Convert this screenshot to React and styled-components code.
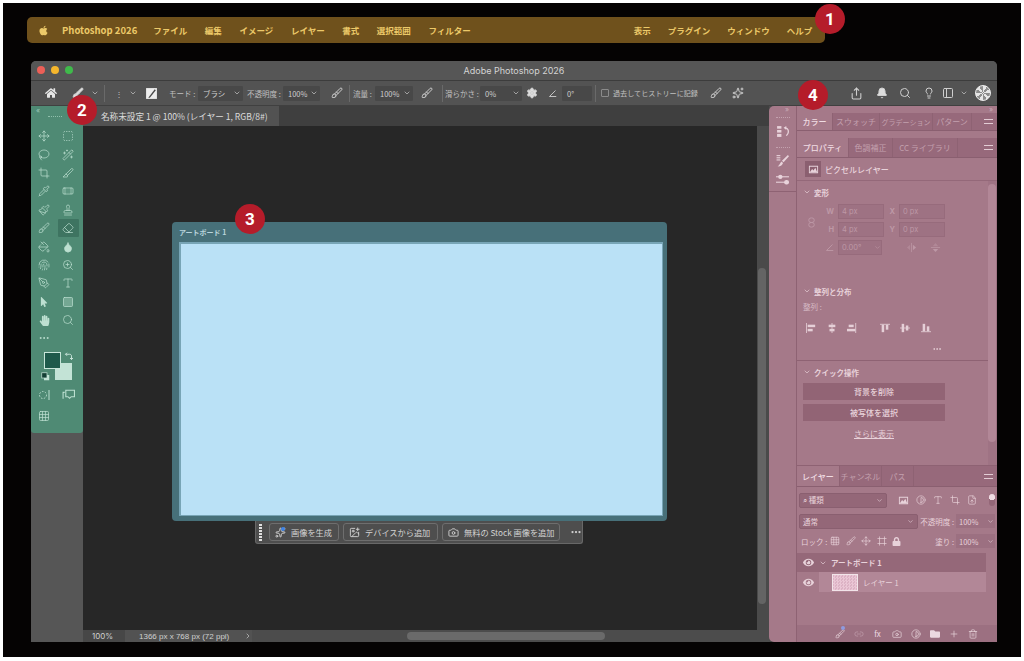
import React from "react";
import styled, { createGlobalStyle } from "styled-components";
import { FaApple, FaHome, FaHandPaper, FaFolder, FaMousePointer, FaLock, FaEye } from "react-icons/fa";
import {
  Brush, ChevronDown, ChevronRight, Settings, Share, Bell, Search,
  Lightbulb, PanelLeft, Move, SquareDashed, Lasso, WandSparkles, Crop, Slice, Pipette, Bandage,
  Paintbrush, Stamp, Eraser, PaintBucket, Droplet, PenTool, Type, Square,
  Ellipsis, Contrast, Link2, Trash2, Camera, Sparkles, Plus, FileUp, Grid3x3,
  Frame as FrameIcon, Fingerprint, ZoomIn, ImagePlus,
} from "lucide-react";

const GlobalStyle = createGlobalStyle`
  html, body { margin: 0; background: #fff; }
  body { font-family: "Noto Sans CJK JP", "Noto Sans", sans-serif; }
  * { box-sizing: border-box; }
`;

const Frame = styled.div`
  position: relative;
  width: 1018px;
  height: 654px;
  margin: 3px 0 0 3px;
  background: #050303;
  padding: 14px 0 0 24px;
  overflow: hidden;
`;

const Badge = styled.div`
  position: absolute;
  left: ${(p) => p.$x - 18}px;
  top: ${(p) => p.$y - 18}px;
  width: 30px;
  height: 30px;
  border-radius: 50%;
  background: #b51c2a;
  color: #fff;
  font: 700 17px "Liberation Sans Narrow", "Roboto", sans-serif;
  display: flex;
  align-items: center;
  justify-content: center;
  z-index: 5;
`;

const MenuBar = styled.div`
  width: 798px;
  height: 26px;
  background: #6f511c;
  border-radius: 5px;
  display: flex;
  align-items: center;
  padding-left: 11px;
  color: #ecc969;
  font-size: 8.5px;
`;

const MenuItem = styled.span`
  margin-left: ${(p) => p.$gap || 17.6}px;
  font-size: ${(p) => (p.$bold ? 9.5 : 8.5)}px;
  font-weight: 700;
  white-space: nowrap;
`;

const Window = styled.div`
  margin: 18px 0 0 4px;
  width: 966px;
  height: 581px;
  background: #4a4a4a;
  border-radius: 5px 5px 0 0;
  display: flex;
  flex-direction: column;
  overflow: hidden;
`;

const TitleBar = styled.div`
  position: relative;
  height: 20px;
  flex: none;
  background: #565656;
  border-bottom: 1px solid #3c3c3c;
  display: flex;
  align-items: center;
  justify-content: center;
  color: #d4d4d4;
  font: 9px "Inter", sans-serif;
`;

const Lights = styled.div`
  position: absolute;
  left: 6px;
  top: 5px;
  display: flex;
  gap: 6px;
`;

const Light = styled.i`
  width: 8px;
  height: 8px;
  border-radius: 50%;
  background: ${(p) => p.$c};
`;

const OptionBar = styled.div`
  height: 25px;
  flex: none;
  background: #535353;
  border-bottom: 1px solid #404040;
  display: flex;
  align-items: center;
  color: #cfcfcf;
  font-size: 7.5px;
  padding-left: 14px;
  svg { flex: none; }
`;

const OptText = styled.span`
  margin-left: ${(p) => p.$ml || 0}px;
  width: ${(p) => (p.$w ? `${p.$w}px` : "auto")};
  flex: none;
  white-space: nowrap;
  color: #c0c0c0;
  font-size: ${(p) => p.$fs || 7.5}px;
`;

const OptSlot = styled.span`
  margin-left: ${(p) => p.$ml || 0}px;
  display: inline-flex;
  flex: none;
`;

const Divider = styled.i`
  width: 1px;
  height: 17px;
  flex: none;
  background: #6a6a6a;
  margin-left: ${(p) => p.$ml || 0}px;
`;

const OptField = styled.span`
  margin-left: ${(p) => p.$ml || 0}px;
  width: ${(p) => p.$w}px;
  flex: none;
  height: 15px;
  background: #484848;
  display: flex;
  align-items: center;
  justify-content: space-between;
  padding: 0 2px 0 5px;
  border-radius: 1px;
  color: #cfcfcf;
  font-size: 7.5px;
`;

const CheckBox = styled.i`
  width: 8px;
  height: 8px;
  flex: none;
  border: 1px solid #8b8b8b;
  border-radius: 1px;
  margin-left: ${(p) => p.$ml || 0}px;
`;

const Avatar = styled.span`
  width: 16px;
  height: 16px;
  flex: none;
  margin-left: 7px;
  border-radius: 50%;
  background: repeating-conic-gradient(#e6e6e6 0 30deg, #8d8d8d 30deg 60deg);
  border: 1px solid #eee;
`;

const Workspace = styled.div`
  flex: 1;
  display: flex;
  min-height: 0;
`;

const LeftColumn = styled.div`
  width: 52px;
  flex: none;
  background: #565656;
`;

const ToolPanel = styled.div`
  height: 327px;
  background: #4f8a74;
  border-radius: 0 0 3px 3px;
  display: flex;
  flex-direction: column;
  align-items: stretch;
  color: #bde0d1;
`;

const ToolHead = styled.div`
  height: 21px;
  flex: none;
  padding: 0 0 0 5px;
  color: #9cc7b6;
  font: 7px/9px "Inter", sans-serif;
`;

const Grip = styled.i`
  display: block;
  width: ${(p) => p.$w || 14}px;
  height: 1px;
  margin: ${(p) => p.$m || "1px auto 0"};
  border-top: 1px dotted ${(p) => p.$c || "#8fbfab"};
`;

const ToolGrid = styled.div`
  display: grid;
  grid-template-columns: 24px 24px;
  grid-auto-rows: 18.4px;
  justify-items: center;
  align-items: center;
  padding-left: 1px;
  margin-top: ${(p) => p.$mt || 0}px;
`;

const ToolCell = styled.span`
  width: 21px;
  height: 18px;
  display: flex;
  align-items: center;
  justify-content: center;
  background: ${(p) => (p.$active ? "#3e7461" : "transparent")};
  border-radius: 1px;
`;

const Swatches = styled.div`
  position: relative;
  height: 34px;
  margin: 4px 0 0 13px;
`;

const Swatch = styled.i`
  position: absolute;
  left: ${(p) => p.$x}px;
  top: ${(p) => p.$y}px;
  width: 17px;
  height: 17px;
  background: ${(p) => p.$c};
  border: ${(p) => (p.$line ? "1px solid #c8e6da" : "none")};
`;

const SwatchTool = styled.span`
  position: absolute;
  left: ${(p) => p.$x}px;
  top: ${(p) => p.$y}px;
  display: flex;
  color: #d5ece3;
`;

const Center = styled.div`
  width: 686px;
  flex: none;
  display: flex;
  flex-direction: column;
  background: #3e3e3e;
`;

const DocTabs = styled.div`
  height: 20px;
  flex: none;
  display: flex;
  background: #3f3f3f;
`;

const DocTab = styled.div`
  width: 196px;
  background: #525252;
  color: #dcdcdc;
  font-size: 8.6px;
  display: flex;
  align-items: center;
  padding-left: 18px;
  white-space: nowrap;
`;

const CanvasRow = styled.div`
  flex: 1;
  display: flex;
  min-height: 0;
`;

const Canvas = styled.div`
  width: 674px;
  flex: none;
  background: #272727;
  padding: 96px 0 0 89px;
`;

const VScroll = styled.div`
  width: 12px;
  background: #4a4a4a;
  padding: 142px 3px 0 1px;
`;

const VThumb = styled.div`
  height: 336px;
  background: #646464;
  border-radius: 4px;
`;

const Artboard = styled.div`
  width: 495px;
  height: 299px;
  background: #477079;
  border-radius: 4px;
  padding: 0 4px 5px 7px;
  display: flex;
  flex-direction: column;
`;

const ArtboardTitle = styled.div`
  height: 20px;
  flex: none;
  display: flex;
  align-items: center;
  color: #b9d4dc;
  font-size: 7px;
  font-weight: 700;
`;

const ArtboardFill = styled.div`
  flex: 1;
  background: #bae1f6;
  border: 2px solid #78a5b6;
  border-right-width: 1px;
  border-bottom-width: 1px;
`;

const TaskBar = styled.div`
  margin-left: 83px;
  width: 328px;
  height: 23px;
  background: #4e4e4e;
  border: 1px solid #686868;
  border-top: none;
  border-radius: 0 0 3px 3px;
  display: flex;
  align-items: center;
  padding-left: 3px;
  color: #d3d3d3;
  font-size: 8.2px;
`;

const GripBar = styled.i`
  width: 3px;
  height: 17px;
  margin-right: 7px;
  background: repeating-linear-gradient(#e0e0e0 0 2px, transparent 2px 3px);
`;

const TaskButton = styled.span`
  position: relative;
  width: ${(p) => p.$w}px;
  height: 18px;
  margin-right: 4px;
  border: 1px solid #6e6e6e;
  border-radius: 3px;
  display: flex;
  align-items: center;
  gap: 5px;
  padding-left: 5px;
  white-space: nowrap;
  svg { flex: none; }
`;

const BlueDot = styled.i`
  position: absolute;
  left: ${(p) => p.$x}px;
  top: ${(p) => p.$y}px;
  width: 4px;
  height: 4px;
  border-radius: 50%;
  background: ${(p) => p.$c || "#3f83e6"};
`;

const StatusBar = styled.div`
  height: 12px;
  flex: none;
  display: flex;
  align-items: stretch;
  background: #4c4c4c;
  color: #cfcfcf;
`;

const ZoomField = styled.span`
  width: 42px;
  padding-left: 9px;
  background: #474747;
  font: 8px/12px "Inter", sans-serif;
`;

const DocInfo = styled.span`
  width: 127px;
  padding-left: 14px;
  background: #525252;
  display: flex;
  align-items: center;
  justify-content: space-between;
  font: 8px "Liberation Sans", sans-serif;
  white-space: nowrap;
`;

const HThumb = styled.span`
  width: 198px;
  height: 8px;
  margin: 2px 0 0 155px;
  background: #6a6a6a;
  border-radius: 4px;
`;

const RightPanel = styled.div`
  position: relative;
  width: 228px;
  flex: none;
  background: #a57989;
  border-radius: 5px 0 0 5px;
  display: flex;
  color: #e8d2da;
  font-size: 8px;
`;

const CollapseMark = styled.span`
  position: absolute;
  top: 0;
  left: ${(p) => p.$x}px;
  color: #c9a9b6;
  font: 7px/7px "Inter", sans-serif;
`;

const Dock = styled.div`
  width: 28px;
  flex: none;
  border-right: 1px solid #8e6273;
  padding-top: 11px;
  color: #e8d2da;
`;

const DockGroup = styled.div`
  height: ${(p) => p.$h}px;
  display: flex;
  flex-direction: column;
  align-items: center;
  gap: ${(p) => p.$gap}px;
  border-bottom: ${(p) => (p.$line ? "1px solid #8e6273" : "none")};
`;

const PanelMain = styled.div`
  flex: 1;
  display: flex;
  flex-direction: column;
  padding-top: 7px;
  min-width: 0;
`;

const TabRow = styled.div`
  height: ${(p) => p.$h}px;
  flex: none;
  margin-bottom: ${(p) => p.$mb || 0}px;
  background: #97697b;
  border-bottom: 1px solid #8a5f70;
  display: flex;
  align-items: stretch;
  position: relative;
`;

const Tab = styled.span`
  width: ${(p) => p.$w}px;
  display: flex;
  align-items: center;
  justify-content: center;
  white-space: nowrap;
  overflow: hidden;
  color: ${(p) => (p.$active ? "#f0dce3" : "#c3a0ae")};
  background: ${(p) => (p.$active ? "#a57989" : "transparent")};
  border-right: 1px solid #8e6273;
  font-size: ${(p) => p.$fs || 8}px;
  font-weight: ${(p) => (p.$active ? 500 : 400)};
`;

const TabMenu = styled.i`
  margin: auto 4px auto auto;
  width: 9px;
  height: 5px;
  border-top: 1px solid #e3cdd5;
  border-bottom: 1px solid #e3cdd5;
`;

const PixelRow = styled.div`
  height: 23px;
  flex: none;
  border-bottom: 1px solid #946879;
  display: flex;
  align-items: center;
  gap: 4px;
  padding-left: 8px;
  font-weight: 500;
`;

const PixelChip = styled.span`
  width: 16px;
  height: 16px;
  background: #8b5f70;
  display: flex;
  align-items: center;
  justify-content: center;
`;

const PropsArea = styled.div`
  height: 285px;
  flex: none;
  display: flex;
`;

const PropsBody = styled.div`
  width: 191px;
  flex: none;
`;

const ScrollTrack = styled.div`
  width: 9px;
  padding: 3px 1px 24px 0;
  background: #9f7384;
`;

const ScrollThumb = styled.div`
  height: 100%;
  background: #b28797;
  border-radius: 4px;
`;

const Section = styled.div`
  height: ${(p) => p.$h}px;
  border-bottom: ${(p) => (p.$line ? "1px solid #8e6273" : "none")};
  padding: 0 6px;
`;

const SectionHead = styled.div`
  height: 22px;
  display: flex;
  align-items: center;
  gap: 3px;
  font-weight: 700;
  font-size: 7.5px;
`;

const TransformBlock = styled.div`
  display: flex;
`;

const LinkColumn = styled.div`
  width: 16px;
  height: 34px;
  padding: 4px 0 0 3px;
  display: flex;
  align-items: center;
  color: #bd98a6;
`;

const FieldRow = styled.div`
  height: 16px;
  margin-bottom: 2px;
  display: flex;
  align-items: center;
  color: #bd98a6;
  font: 7.5px "Inter", sans-serif;
`;

const FieldLabel = styled.span`
  width: ${(p) => p.$w}px;
  display: flex;
  justify-content: flex-end;
  padding-right: 4px;
  font-weight: 700;
`;

const Field = styled.span`
  width: ${(p) => p.$w}px;
  height: 15px;
  border: 1px solid #976b7c;
  background: #9e7283;
  display: flex;
  align-items: center;
  justify-content: space-between;
  padding-left: 3px;
`;

const Small = styled.div`
  height: 10px;
  line-height: 10px;
  font-size: 7.5px;
  color: #d7bcc6;
`;

const AlignRow = styled.div`
  display: flex;
  margin-top: 11px;
  padding-left: 3px;
  color: #e5cfd7;
`;

const AlignSlot = styled.span`
  width: 20.5px;
  margin-left: ${(p) => p.$ml || 0}px;
  display: flex;
`;

const More = styled.div`
  display: flex;
  justify-content: flex-end;
  margin: 11px 40px 0 0;
`;

const QuickButton = styled.div`
  width: 142px;
  height: 17px;
  margin-bottom: ${(p) => p.$mb || 0}px;
  background: #926475;
  display: flex;
  align-items: center;
  justify-content: center;
  font-weight: 500;
`;

const ShowMore = styled.div`
  width: 142px;
  margin-top: 7px;
  text-align: center;
  text-decoration: underline;
  font-size: 8px;
`;

const LayersPanel = styled.div`
  flex: 1;
  display: flex;
  flex-direction: column;
  border-top: 1px solid #8e6273;
  margin-top: -1px;
`;

const LayerBar = styled.div`
  height: 20px;
  flex: none;
  margin-top: ${(p) => p.$mt || 0}px;
  display: flex;
  align-items: center;
  padding: 0 2px 0 ${(p) => p.$pl ?? 2}px;
`;

const SelectBox = styled.span`
  width: ${(p) => p.$w}px;
  height: 15px;
  background: #946778;
  border: 1px solid #8a5f70;
  border-radius: 2px;
  display: flex;
  align-items: center;
  justify-content: space-between;
  padding: 0 3px;
  font-size: 7.5px;
`;

const IconRun = styled.span`
  display: flex;
  gap: ${(p) => p.$gap}px;
  margin-left: ${(p) => p.$ml || 0}px;
  align-items: center;
`;

const ToggleDot = styled.i`
  width: 6px;
  height: 12px;
  margin-left: 12px;
  border-radius: 3px;
  background: radial-gradient(circle at 50% 3px, #f0dde4 3px, #946778 3px);
`;

const LayerText = styled.span`
  margin-left: ${(p) => p.$ml || 0}px;
  width: ${(p) => (p.$w ? `${p.$w}px` : "auto")};
  white-space: nowrap;
  font-size: 7.5px;
`;

const PushRight = styled(LayerText)`
  margin-left: auto;
`;

const NumBox = styled.span`
  margin-left: 2px;
  width: 39px;
  flex: none;
  height: 14px;
  background: #9c7081;
  display: flex;
  align-items: center;
  justify-content: space-between;
  padding: 0 1px 0 3px;
  font-size: 7.5px;
`;

const LayerRow = styled.div`
  width: 189px;
  height: ${(p) => p.$h}px;
  flex: none;
  margin-top: ${(p) => p.$mt || 0}px;
  display: flex;
  align-items: center;
  padding-left: 6px;
  background: ${(p) => p.$bg};
  font-weight: ${(p) => (p.$bold ? 700 : 400)};
  font-size: 7.5px;
`;

const EyeGutter = styled.span`
  width: 16px;
  flex: none;
  display: flex;
`;

const Thumb = styled.i`
  width: 26px;
  height: 17px;
  margin: 0 5px 0 13px;
  border: 1px solid #f2e4e9;
  background: repeating-conic-gradient(#eac6d5 0 25%, #dcb2c4 0 50%) 0 0 / 3px 3px;
`;

const LayerFooter = styled.div`
  height: 17px;
  flex: none;
  margin-top: auto;
  background: #9c7081;
  display: grid;
  grid-auto-flow: column;
  grid-auto-columns: 19px;
  justify-content: start;
  justify-items: center;
  align-items: center;
  padding-left: 33px;
  color: #ecd9e0;
  font-size: 8px;
`;

const FooterIcon = styled.span`
  position: relative;
  display: flex;
`;

// small drawn marks that the icon packages have no match for
const Mark = ({ size = 10, view = 12, children, ...rest }) => (
  <svg width={size} height={size} viewBox={`0 0 ${view} ${view}`} fill="currentColor" {...rest}>
    {children}
  </svg>
);

const alignShapes = [
  <><rect x="0" y="0" width="1" height="12" /><rect x="2" y="2" width="9" height="3" /><rect x="2" y="7" width="6" height="3" /></>,
  <><rect x="5.5" y="0" width="1" height="12" /><rect x="2" y="2" width="8" height="3" /><rect x="3" y="7" width="6" height="3" /></>,
  <><rect x="2" y="2" width="6" height="3" /><rect x="0" y="7" width="10" height="3" /><rect x="10" y="0" width="1" height="12" /></>,
  <><rect x="0" y="1" width="12" height="1" /><rect x="2" y="2" width="3" height="9" /><rect x="7" y="2" width="3" height="6" /></>,
  <><rect x="0" y="5.5" width="12" height="1" /><rect x="2" y="1" width="3" height="10" /><rect x="7" y="3" width="3" height="6" /></>,
  <><rect x="0" y="10" width="12" height="1" /><rect x="2" y="1" width="3" height="9" /><rect x="7" y="4" width="3" height="6" /></>,
];

const PixelMark = () => (
  <Mark size={11}>
    <path d="M1 2h10v8H1zM2 3v6h8V3z" />
    <path d="M2 9l2.5-3.5L6 7l2-3 2 5z" />
  </Mark>
);

const ToggleMark = () => (
  <Mark size={13}>
    <rect x="1" y="1" width="10" height="10" fill="#eee" />
    <path d="M3 10 L9 2 L10 3 L4.5 10z" fill="#4a4a4a" />
  </Mark>
);

const AngleMark = () => (
  <Mark size={9} fill="none" stroke="currentColor" strokeWidth="1.2">
    <path d="M10 2 L2 10 H11" />
  </Mark>
);

const FlipH = () => (
  <Mark size={11}>
    <rect x="5.6" y="1" width="0.8" height="10" />
    <path d="M4.5 3v6L1 6z" fillOpacity="0.5" /><path d="M7.5 3v6L11 6z" />
  </Mark>
);

const FlipV = () => (
  <Mark size={11}>
    <rect x="1" y="5.6" width="10" height="0.8" />
    <path d="M3 4.5h6L6 1z" fillOpacity="0.5" /><path d="M3 7.5h6L6 11z" />
  </Mark>
);

const ChainMark = () => (
  <Mark size={11} fill="none" stroke="currentColor" strokeWidth="1">
    <rect x="3" y="1" width="6" height="5" rx="2.5" />
    <rect x="3" y="6" width="6" height="5" rx="2.5" />
  </Mark>
);

const DockHistory = () => (
  <Mark size={13}>
    <rect x="1" y="1" width="4" height="2.4" /><rect x="1" y="4.6" width="4" height="2.4" /><rect x="1" y="8.2" width="4" height="2.8" />
    <path d="M7 2.5 L9.5 1v1.2C11 2.6 12 4 12 6c0 1.8-1 3.2-2.2 4.2l-.7-.8C10 8.6 10.8 7.5 10.8 6c0-1.3-.5-2.2-1.3-2.6v1.1z" />
  </Mark>
);

const DockBrush = () => (
  <Mark size={13}>
    <rect x="0.5" y="1" width="3.5" height="1" /><rect x="0.5" y="3" width="3.5" height="1" /><rect x="0.5" y="5" width="3.5" height="1" />
    <path d="M11 1l1 1-5 5.5-1.5-1.3zM5 7l1.5 1.3C6 10 4.5 11.5 1.5 11.5 3 10.5 3.8 8.5 5 7z" />
  </Mark>
);

const DockSliders = () => (
  <Mark size={13}>
    <rect x="0" y="3" width="12" height="1" /><circle cx="4" cy="3.5" r="2" />
    <rect x="0" y="8" width="12" height="1" /><rect x="7.5" y="6.5" width="4.5" height="4" rx="2" />
  </Mark>
);

const QuickMask = () => (
  <Mark size={12} fill="none" stroke="currentColor" strokeWidth="1">
    <circle cx="5" cy="6" r="3.5" strokeDasharray="1.5 1.5" /><path d="M11 1v10" />
  </Mark>
);

const ScreenMark = () => (
  <Mark size={13} fill="none" stroke="currentColor" strokeWidth="1">
    <path d="M1 10V4h1.5M3.5 2h8v6h-3l-1.5 1.5L5.5 8h-2z" />
  </Mark>
);

const DefaultColors = () => (
  <Mark size={9}>
    <rect x="4" y="4" width="7" height="7" fill="#c3e3d6" />
    <rect x="1" y="1" width="7" height="7" fill="#143f35" stroke="#c3e3d6" strokeWidth="1" />
  </Mark>
);

const SwapMark = () => (
  <Mark size={9} fill="none" stroke="currentColor" strokeWidth="1.2">
    <path d="M2 3h5.500C9 3 10 4 10 5.500V10" />
    <path d="M4 1L2 3l2 2M8 8l2 2 2-2" />
  </Mark>
);

const ic = { size: 12, strokeWidth: 1.4 };

const toolRows = [
  <Move {...ic} />, <SquareDashed {...ic} strokeDasharray="2 2" />,
  <Lasso {...ic} />, <WandSparkles {...ic} />,
  <Crop {...ic} />, <Slice {...ic} />,
  <Pipette {...ic} />, <Bandage {...ic} />,
  <Paintbrush {...ic} />, <Stamp {...ic} />,
  <Brush {...ic} />, <Eraser {...ic} />,
  <PaintBucket {...ic} />, <Droplet {...ic} fill="currentColor" />,
  <Fingerprint {...ic} />, <ZoomIn {...ic} />,
  <PenTool {...ic} />, <Type {...ic} />,
  <FaMousePointer size={10} />, <Square {...ic} fill="#74a793" />,
  <FaHandPaper size={11} />, <Search {...ic} />,
];

function Tools() {
  return (
    <ToolPanel>
      <ToolHead>
        «
        <Grip $m="1px 0 0 12px" />
      </ToolHead>
      <ToolGrid>
        {toolRows.map((icon, i) => (
          <ToolCell key={i} $active={i === 11}>{icon}</ToolCell>
        ))}
        <ToolCell><Ellipsis size={12} strokeWidth={2} /></ToolCell>
      </ToolGrid>
      <Swatches>
        <Swatch $x={11} $y={11} $c="#c3e3d6" />
        <Swatch $x={0} $y={0} $c="#1e5a4b" $line />
        <SwatchTool $x={20} $y={0}><SwapMark /></SwatchTool>
        <SwatchTool $x={-3} $y={20}><DefaultColors /></SwatchTool>
      </Swatches>
      <ToolGrid>
        <ToolCell><QuickMask /></ToolCell>
        <ToolCell><ScreenMark /></ToolCell>
      </ToolGrid>
      <ToolGrid $mt={3}>
        <ToolCell><Grid3x3 {...ic} /></ToolCell>
      </ToolGrid>
    </ToolPanel>
  );
}

function Options() {
  const chev = <ChevronDown size={8} />;
  return (
    <OptionBar>
      <FaHome size={12} color="#e6e6e6" />
      <OptSlot $ml={15}><Brush size={12} fill="#ddd" /></OptSlot>
      <OptSlot $ml={7}>{chev}</OptSlot>
      <Divider $ml={5} />
      <OptText $ml={10} $w={8}>⋮</OptText>
      <OptSlot $ml={6}>{chev}</OptSlot>
      <OptSlot $ml={8}><ToggleMark /></OptSlot>
      <OptText $ml={11} $w={29}>モード :</OptText>
      <OptField $w={45}>ブラシ {chev}</OptField>
      <OptText $ml={4} $w={36}>不透明度 :</OptText>
      <OptField $w={37}>100% {chev}</OptField>
      <OptSlot $ml={11}><Brush size={12} /></OptSlot>
      <Divider $ml={6} />
      <OptText $ml={3} $w={22}>流量 :</OptText>
      <OptField $w={38}>100% {chev}</OptField>
      <OptSlot $ml={8}><Brush size={12} /></OptSlot>
      <Divider $ml={9} />
      <OptText $ml={2} $w={35}>滑らかさ :</OptText>
      <OptField $w={42}>0% {chev}</OptField>
      <OptSlot $ml={4}><Settings size={12} fill="#ddd" /></OptSlot>
      <OptSlot $ml={10}><AngleMark /></OptSlot>
      <OptField $ml={5} $w={30}>0°</OptField>
      <Divider $ml={3} />
      <CheckBox $ml={5} />
      <OptText $ml={4} $w={86} $fs={7.1}>過去してヒストリーに記録</OptText>
      <OptSlot $ml={11}><Brush size={12} /></OptSlot>
      <OptSlot $ml={10}><Sparkles size={12} /></OptSlot>
      <OptSlot $ml={106}><Share size={13} /></OptSlot>
      <OptSlot $ml={13}><Bell size={12} fill="#ddd" /></OptSlot>
      <OptSlot $ml={11}><Search size={12} /></OptSlot>
      <OptSlot $ml={12}><Lightbulb size={12} /></OptSlot>
      <OptSlot $ml={7}><PanelLeft size={12} /></OptSlot>
      <OptSlot $ml={6}>{chev}</OptSlot>
      <Avatar />
    </OptionBar>
  );
}

function PanelColumn() {
  const i = { size: 10, strokeWidth: 1.6 };
  return (
    <RightPanel>
      <CollapseMark $x={16}>»</CollapseMark>
      <CollapseMark $x={220}>»</CollapseMark>
      <Dock>
        <DockGroup $h={25} $gap={7}>
          <Grip $c="#c4a2af" $m="0" />
          <DockHistory />
        </DockGroup>
        <DockGroup $h={50} $gap={6} $line>
          <Grip $c="#c4a2af" $m="5px 0 0" />
          <DockBrush />
          <DockSliders />
        </DockGroup>
      </Dock>
      <PanelMain>
        <TabRow $h={18} $mb={7}>
          <Tab $w={36} $active>カラー</Tab>
          <Tab $w={47}>スウォッチ</Tab>
          <Tab $w={53} $fs={7}>グラデーション</Tab>
          <Tab $w={39}>パターン</Tab>
          <TabMenu />
        </TabRow>
        <TabRow $h={20}>
          <Tab $w={52} $active>プロパティ</Tab>
          <Tab $w={44}>色調補正</Tab>
          <Tab $w={65}>CC ライブラリ</Tab>
          <TabMenu />
        </TabRow>
        <PixelRow>
          <PixelChip><PixelMark /></PixelChip>
          ピクセルレイヤー
        </PixelRow>
        <PropsArea>
          <PropsBody>
            <Section $h={99}>
              <SectionHead><ChevronDown size={8} /> 変形</SectionHead>
              <TransformBlock>
                <LinkColumn><ChainMark /></LinkColumn>
                <div>
                  <FieldRow>
                    <FieldLabel $w={19}>W</FieldLabel>
                    <Field $w={46}>4 px</Field>
                    <FieldLabel $w={15}>X</FieldLabel>
                    <Field $w={46}>0 px</Field>
                  </FieldRow>
                  <FieldRow>
                    <FieldLabel $w={19}>H</FieldLabel>
                    <Field $w={46}>4 px</Field>
                    <FieldLabel $w={15}>Y</FieldLabel>
                    <Field $w={46}>0 px</Field>
                  </FieldRow>
                  <FieldRow>
                    <FieldLabel $w={19}><AngleMark /></FieldLabel>
                    <Field $w={44}>0.00°<ChevronDown size={7} /></Field>
                    <OptSlot $ml={24}><FlipH /></OptSlot>
                    <OptSlot $ml={13}><FlipV /></OptSlot>
                  </FieldRow>
                </div>
              </TransformBlock>
            </Section>
            <Section $h={81} $line>
              <SectionHead><ChevronDown size={8} /> 整列と分布</SectionHead>
              <Small>整列 :</Small>
              <AlignRow>
                {alignShapes.map((shape, n) => (
                  <AlignSlot key={n} $ml={n === 3 ? 12 : 0}><Mark>{shape}</Mark></AlignSlot>
                ))}
              </AlignRow>
              <More><Ellipsis size={10} /></More>
            </Section>
            <Section $h={105}>
              <SectionHead><ChevronDown size={8} /> クイック操作</SectionHead>
              <QuickButton $mb={4}>背景を削除</QuickButton>
              <QuickButton>被写体を選択</QuickButton>
              <ShowMore>さらに表示</ShowMore>
            </Section>
          </PropsBody>
          <ScrollTrack><ScrollThumb /></ScrollTrack>
        </PropsArea>
        <LayersPanel>
          <TabRow $h={21} $mb={3}>
            <Tab $w={43} $active>レイヤー</Tab>
            <Tab $w={42}>チャンネル</Tab>
            <Tab $w={32}>パス</Tab>
            <TabMenu />
          </TabRow>
          <LayerBar>
            <SelectBox $w={89}><span>⌕ 種類</span><ChevronDown size={7} /></SelectBox>
            <IconRun $gap={7} $ml={11}>
              <PixelMark /><Contrast {...i} /><Type {...i} /><Crop {...i} /><FileUp {...i} />
            </IconRun>
            <ToggleDot />
          </LayerBar>
          <LayerBar $mt={1}>
            <SelectBox $w={119}><span>通常</span><ChevronDown size={7} /></SelectBox>
            <PushRight>不透明度 :</PushRight>
            <NumBox>100%<ChevronDown size={7} /></NumBox>
          </LayerBar>
          <LayerBar $pl={4}>
            <LayerText $w={29}>ロック :</LayerText>
            <IconRun $gap={5.5}>
              <Grid3x3 {...i} /><Brush {...i} /><Move {...i} /><FrameIcon {...i} /><FaLock size={9} />
            </IconRun>
            <PushRight>塗り :</PushRight>
            <NumBox>100%<ChevronDown size={7} /></NumBox>
          </LayerBar>
          <LayerRow $h={19} $mt={2} $bg="#956879" $bold>
            <EyeGutter><FaEye size={11} /></EyeGutter>
            <ChevronDown size={8} />
            <LayerText $ml={4}>アートボード 1</LayerText>
          </LayerRow>
          <LayerRow $h={20} $bg="linear-gradient(90deg, #a57989 22px, #b28797 22px)">
            <EyeGutter><FaEye size={11} /></EyeGutter>
            <Thumb />
            <LayerText>レイヤー 1</LayerText>
          </LayerRow>
          <LayerFooter>
            <FooterIcon><Brush {...i} /><BlueDot $x={6} $y={-3} $c="#8f9be0" /></FooterIcon>
            <Link2 {...i} color="#c3a0ae" />
            <span>fx</span>
            <Camera {...i} />
            <Contrast {...i} />
            <FaFolder size={10} />
            <Plus {...i} />
            <Trash2 {...i} />
          </LayerFooter>
        </LayersPanel>
      </PanelMain>
    </RightPanel>
  );
}

export default function App() {
  return (
    <Frame>
      <GlobalStyle />
      <Badge $x={830} $y={19}>1</Badge>
      <Badge $x={82} $y={110}>2</Badge>
      <Badge $x={250} $y={219}>3</Badge>
      <Badge $x={813} $y={95}>4</Badge>
      <MenuBar>
        <FaApple size={11} />
        <MenuItem $gap={13} $bold>Photoshop 2026</MenuItem>
        <MenuItem $gap={16}>ファイル</MenuItem>
        <MenuItem>編集</MenuItem>
        <MenuItem>イメージ</MenuItem>
        <MenuItem>レイヤー</MenuItem>
        <MenuItem>書式</MenuItem>
        <MenuItem>選択範囲</MenuItem>
        <MenuItem>フィルター</MenuItem>
        <MenuItem $gap={163}>表示</MenuItem>
        <MenuItem $gap={17}>プラグイン</MenuItem>
        <MenuItem $gap={17}>ウィンドウ</MenuItem>
        <MenuItem $gap={17}>ヘルプ</MenuItem>
      </MenuBar>
      <Window>
        <TitleBar>
          <Lights>
            <Light $c="#ec5f57" />
            <Light $c="#f5b62c" />
            <Light $c="#3fba4b" />
          </Lights>
          Adobe Photoshop 2026
        </TitleBar>
        <Options />
        <Workspace>
          <LeftColumn><Tools /></LeftColumn>
          <Center>
            <DocTabs><DocTab>名称未設定 1 @ 100% (レイヤー 1, RGB/8#)</DocTab></DocTabs>
            <CanvasRow>
              <Canvas>
                <Artboard>
                  <ArtboardTitle>アートボード 1</ArtboardTitle>
                  <ArtboardFill />
                </Artboard>
                <TaskBar>
                  <GripBar />
                  <TaskButton $w={70}><Sparkles size={11} /><BlueDot $x={11} $y={3} />画像を生成</TaskButton>
                  <TaskButton $w={95}><ImagePlus size={11} />デバイスから追加</TaskButton>
                  <TaskButton $w={118}><Camera size={11} />無料の Stock 画像を追加</TaskButton>
                  <OptSlot $ml={6}><Ellipsis size={12} strokeWidth={2.5} /></OptSlot>
                </TaskBar>
              </Canvas>
              <VScroll><VThumb /></VScroll>
            </CanvasRow>
            <StatusBar>
              <ZoomField>100%</ZoomField>
              <DocInfo>1366 px x 768 px (72 ppi)<ChevronRight size={8} /></DocInfo>
              <HThumb />
            </StatusBar>
          </Center>
          <PanelColumn />
        </Workspace>
      </Window>
    </Frame>
  );
}
